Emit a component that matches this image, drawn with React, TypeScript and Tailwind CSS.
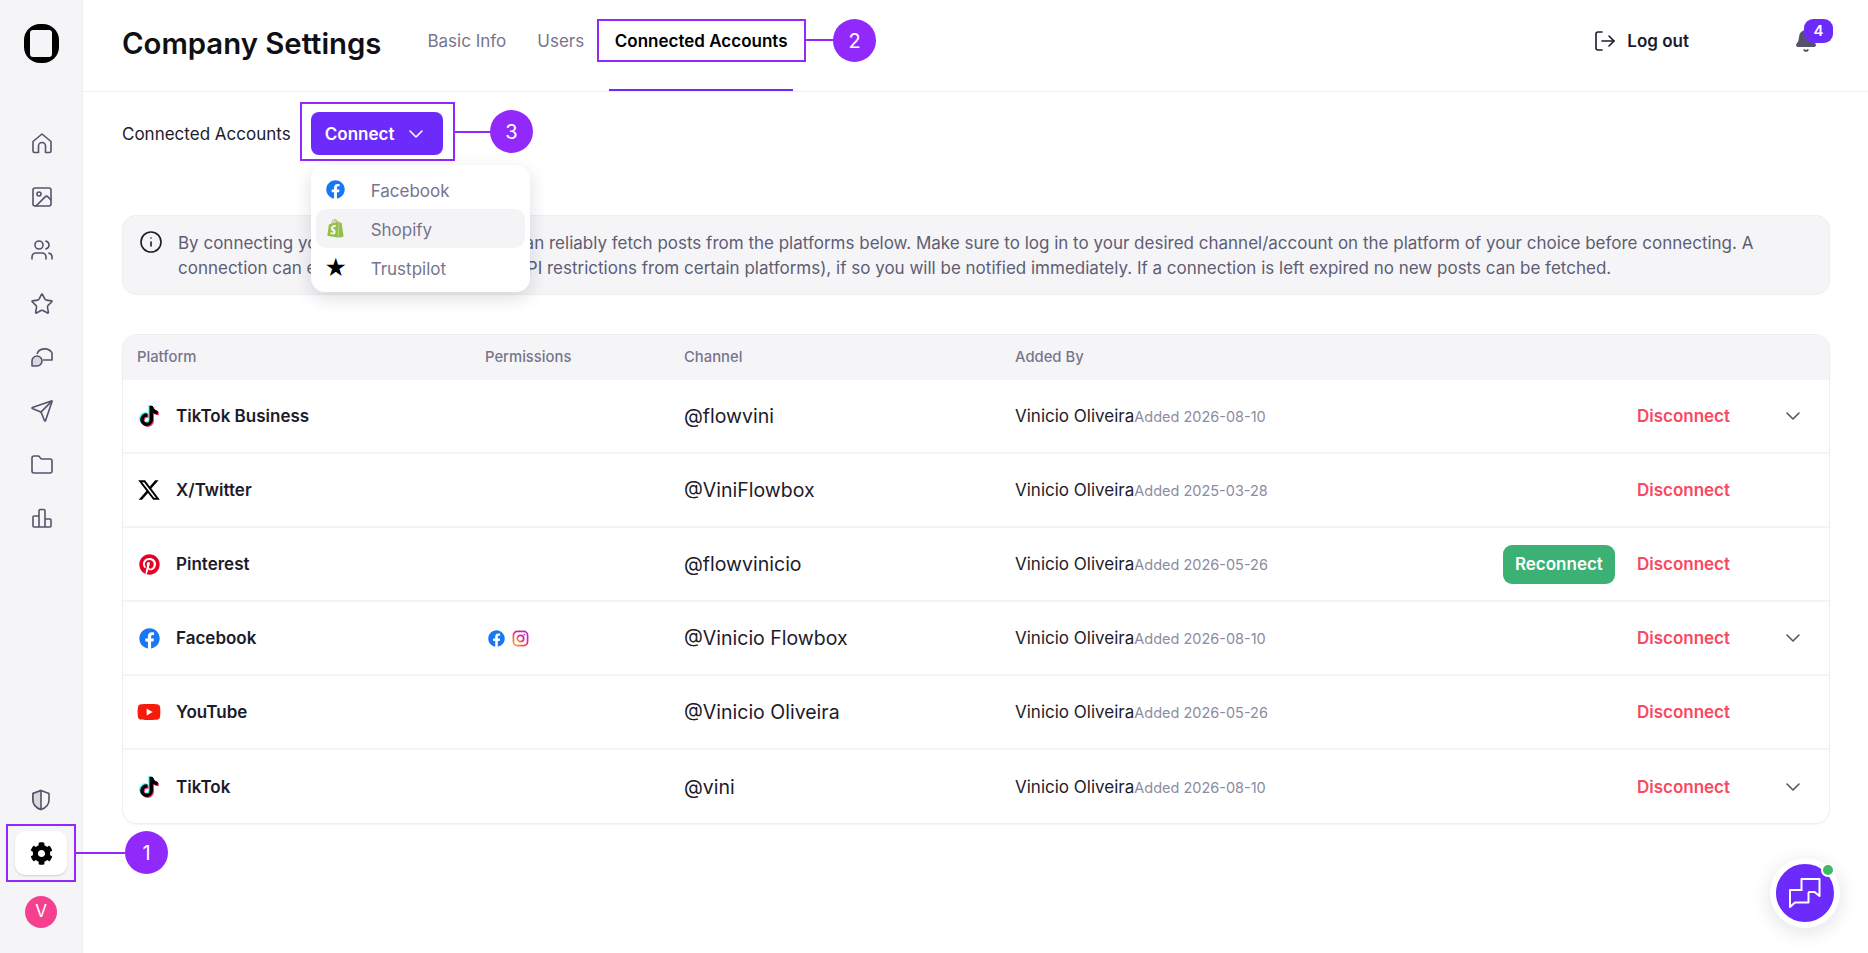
import { ChevronDown, LogOut, Info, Star, Send, Folder, Users, Image, Bell } from "lucide-react";
import { FaFacebook, FaPinterest, FaYoutube, FaShopify, FaCog } from "react-icons/fa";
import { FaTiktok, FaXTwitter } from "react-icons/fa6";

const HomeIcon = () => (
  <svg width="24" height="24" viewBox="0 0 24 24" fill="none" stroke="currentColor" strokeWidth="1.6" strokeLinejoin="round">
    <path d="M3 10.5 12 3l9 7.5V20a1.5 1.5 0 0 1-1.5 1.5h-4V15a3.5 3.5 0 0 0-7 0v6.5h-4A1.5 1.5 0 0 1 3 20z" />
  </svg>
);

const ChatsIcon = () => (
  <svg width="24" height="24" viewBox="0 0 24 24" fill="none" stroke="currentColor" strokeWidth="1.6" strokeLinejoin="round">
    <path d="M7 9a8 7 0 0 1 15-1v7h-9" />
    <path d="M2 21v-5a5 5 0 1 1 5 5z" fill="#d8d8de" />
  </svg>
);

const BarsIcon = () => (
  <svg width="24" height="24" viewBox="0 0 24 24" fill="none" stroke="currentColor" strokeWidth="1.6" strokeLinejoin="round">
    <path d="M9 21V5a1.5 1.5 0 0 1 1.500-1.500h3A1.500 1.500 0 0 1 15 5v16" />
    <path d="M9 10H4a1 1 0 0 0-1 1v9a1 1 0 0 0 1 1h16a1 1 0 0 0 1-1v-6a1 1 0 0 0-1-1h-5" />
  </svg>
);

const ShieldIcon = () => (
  <svg width="24" height="24" viewBox="0 0 24 24" fill="none" stroke="currentColor" strokeWidth="1.6" strokeLinejoin="round">
    <path d="M12 2.500 4 5.500V12c0 5 3.500 8 8 9.500 4.500-1.500 8-4.500 8-9.500V5.500z" />
    <path d="M12 2.500 4 5.500V12c0 5 3.500 8 8 9.500z" fill="#d8d8de" />
  </svg>
);

const InstagramIcon = () => (
  <svg width="17" height="17" viewBox="0 0 24 24" fill="none" strokeWidth="2.4">
    <defs>
      <linearGradient id="ig" x1="0" y1="1" x2="1" y2="0">
        <stop offset="0" stopColor="#fdb32b" />
        <stop offset="0.5" stopColor="#f0246e" />
        <stop offset="1" stopColor="#a62fd6" />
      </linearGradient>
    </defs>
    <rect x="2" y="2" width="20" height="20" rx="5.500" stroke="url(#ig)" />
    <circle cx="12" cy="12" r="4.500" stroke="url(#ig)" />
    <circle cx="17.500" cy="6.500" r="1.300" fill="#c92bb0" />
  </svg>
);

const TikTokIcon = () => (
  <span className="relative block h-[20px] w-[20px]">
    <FaTiktok size={20} className="absolute left-[-1px] top-[-1px] text-[#25f4ee]" />
    <FaTiktok size={20} className="absolute left-[1px] top-[1px] text-[#fe2c55]" />
    <FaTiktok size={20} className="absolute left-0 top-0 text-black" />
  </span>
);

const ChatBubbles = () => (
  <svg width="34" height="34" viewBox="0 0 34 34" fill="none" stroke="#fff" strokeWidth="2" strokeLinejoin="round" strokeLinecap="round">
    <path d="M13.500 14V3H31.500V20L26.500 16H21" />
    <path d="M13.500 14H2V31L7 26.500H20.500V17" />
  </svg>
);

const Marker = ({ n, className = "" }: { n: number; className?: string }) => (
  <span className={`absolute flex h-[43px] w-[43px] items-center justify-center rounded-full bg-[#9129fb] text-[20px] text-white ${className}`}>
    {n}
  </span>
);

const navIcons = [
  <HomeIcon />,
  <Image size={24} strokeWidth={1.6} />,
  <Users size={24} strokeWidth={1.6} />,
  <Star size={24} strokeWidth={1.6} />,
  <ChatsIcon />,
  <Send size={24} strokeWidth={1.6} />,
  <Folder size={24} strokeWidth={1.6} />,
  <BarsIcon />,
];

const rows = [
  { icon: <TikTokIcon />, name: "TikTok Business", channel: "@flowvini", date: "2026-08-10", expand: true },
  { icon: <FaXTwitter size={24} className="text-black" />, name: "X/Twitter", channel: "@ViniFlowbox", date: "2025-03-28" },
  { icon: <FaPinterest size={21} className="text-[#e60023]" />, name: "Pinterest", channel: "@flowvinicio", date: "2026-05-26", reconnect: true },
  { icon: <FaFacebook size={21} className="text-[#1877f2]" />, name: "Facebook", channel: "@Vinicio Flowbox", date: "2026-08-10", expand: true, perms: true },
  { icon: <FaYoutube size={24} className="text-[#f61c0d]" />, name: "YouTube", channel: "@Vinicio Oliveira", date: "2026-05-26" },
  { icon: <TikTokIcon />, name: "TikTok", channel: "@vini", date: "2026-08-10", expand: true },
];

const connectOptions = [
  { icon: <FaFacebook size={19} className="text-[#1877f2]" />, label: "Facebook" },
  { icon: <FaShopify size={19} className="text-[#95bf47]" />, label: "Shopify", active: true },
  { icon: <span className="text-[22px] leading-none text-black">★</span>, label: "Trustpilot" },
];

export default function App() {
  return (
    <div className="relative flex h-[953px] overflow-hidden bg-white font-['Inter',sans-serif] text-[#101014]">
      {/* Sidebar */}
      <aside className="flex w-[83px] shrink-0 flex-col items-center border-r border-[#eeeef1] bg-[#f5f5f8] pb-[25px] pt-[24px] text-[#55536a]">
        <div className="flex h-[39px] w-[35px] items-center justify-center rounded-[16px] bg-black">
          <div className="h-[27px] w-[22px] rounded-[3px] bg-[#f5f5f8]" />
        </div>
        <nav className="mt-[68px] flex flex-col items-center gap-[29.600px] pl-[1px]">
          {navIcons.map((icon, i) => (
            <span key={i} className="flex h-[24px] w-[24px] items-center justify-center">
              {icon}
            </span>
          ))}
        </nav>
        <div className="mt-auto flex flex-col items-center">
          <ShieldIcon />
          <div className="relative mt-[19px] flex h-[44px] w-[52px] items-center justify-center rounded-[10px] bg-white shadow-[0_1px_2px_rgba(0,0,0,0.15)]">
            <FaCog size={23} className="text-black" />
            <span className="absolute left-[-9px] top-[-7px] h-[58px] w-[70px] border-2 border-[#9129fb]" />
          </div>
          <div className="mt-[21px] flex h-[32px] w-[32px] items-center justify-center rounded-full bg-[#f5408f] text-[17px] text-white">
            V
          </div>
        </div>
      </aside>

      {/* Main column */}
      <main className="flex min-w-0 flex-1 flex-col">
        <header className="flex h-[92px] shrink-0 items-start border-b border-[#f1f1f4] pl-[39px]">
          <h1 className="mt-[24px] text-[29.300px] font-semibold leading-[40px]">Company Settings</h1>
          <div className="ml-[46px] flex h-full items-start text-[17px] text-[#77758c]">
            <span className="pt-[30px] leading-[22px]">Basic Info</span>
            <span className="ml-[31px] pt-[30px] leading-[22px]">Users</span>
            <span className="relative ml-[25px] flex h-full w-[184px] justify-center border-b-2 border-[#6c2bfa] pt-[30px] font-semibold leading-[22px] text-black">
              Connected Accounts
              <span className="absolute left-[-12px] top-[19px] h-[43px] w-[209px] border-2 border-[#9129fb]" />
            </span>
          </div>
          <div className="ml-auto flex pt-[29px]">
            <span className="flex items-center gap-[10px] text-[17px] font-semibold leading-[24px] text-[#1c1b2b]">
              <LogOut size={24} strokeWidth={1.6} />
              <span>Log out</span>
            </span>
            <span className="relative ml-[105px] mr-[50px] flex h-[24px] w-[24px] items-center justify-center text-[#55536a]">
              <Bell size={26} fill="currentColor" />
              <span className="absolute left-[10px] top-[-10px] flex h-[24px] w-[29px] items-center justify-center rounded-[9px] bg-[#6c2bfa] text-[15px] font-semibold text-white">
                4
              </span>
            </span>
          </div>
        </header>

        <div className="flex flex-col pl-[39px] pr-[38px]">
          <div className="mt-[20px] flex h-[43px] items-center">
            <span className="pt-[2px] text-[17px] text-[#1c1b2b]">Connected Accounts</span>
            <div className="relative ml-[20px]">
              <button className="flex h-[43px] w-[132px] items-center justify-center gap-[10px] rounded-[8px] bg-[#6c2bfa] text-[17px] font-semibold text-white">
                <span className="pt-[2px]">Connect</span>
                <ChevronDown size={24} strokeWidth={1.6} />
              </button>
              <span className="absolute left-[-11px] top-[-10px] h-[59px] w-[155px] border-2 border-[#9129fb]" />
              <div className="absolute left-0 top-[53px] z-10 flex h-[127px] w-[219px] flex-col rounded-[14px] bg-white p-[5px] shadow-[0_6px_18px_rgba(20,20,40,0.14)]">
                {connectOptions.map((o) => (
                  <div
                    key={o.label}
                    className={`flex h-[39px] items-center rounded-[10px] pl-[8px] text-[17px] text-[#77758c] ${o.active ? "bg-[#f4f4f7]" : ""}`}
                  >
                    <span className="flex w-[24px] justify-center">{o.icon}</span>
                    <span className="ml-[23px] pt-[4px]">{o.label}</span>
                  </div>
                ))}
              </div>
            </div>
          </div>

          <div className="mt-[60px] flex h-[80px] gap-[15px] rounded-[14px] border border-[#eeeef1] bg-[#f5f5f8] pl-[16px] pr-[60px] pt-[14px] text-[17px] leading-[25px] text-[#5f5d73]">
            <Info size={24} strokeWidth={1.6} className="shrink-0 text-[#1c1b2b]" />
            <p className="pt-[1px]">
              By connecting your accounts, the system can reliably fetch posts from the platforms below. Make sure to log in to your desired channel/account on the platform of your choice before connecting. A connection can expire at any time (due to API restrictions from certain platforms), if so you will be notified immediately. If a connection is left expired no new posts can be fetched.
            </p>
          </div>

          <div className="mt-[39px] overflow-hidden rounded-[14px] border border-[#eeeef1] shadow-[0_1px_1px_rgba(0,0,0,0.04)]">
            <div className="grid h-[45px] grid-cols-[348px_199px_331px_1fr] items-center bg-[#f5f5f8] pl-[14px] text-[14.800px] font-medium text-[#77758c]">
              <span>Platform</span>
              <span>Permissions</span>
              <span>Channel</span>
              <span>Added By</span>
            </div>
            {rows.map((r) => (
              <div
                key={r.name}
                className="grid h-[74px] grid-cols-[348px_199px_331px_1fr] items-center border-b-2 border-[#f4f4f6] pl-[14px] last:h-[73px] last:border-b-0"
              >
                <div className="flex items-center">
                  <span className="flex w-[24px] justify-center">{r.icon}</span>
                  <span className="ml-[15px] pt-[2px] text-[17px] font-semibold text-[#1c1b2b]">{r.name}</span>
                </div>
                <div className="flex items-center gap-[7px] pl-[3px]">
                  {r.perms && (
                    <>
                      <FaFacebook size={17} className="text-[#1877f2]" />
                      <InstagramIcon />
                    </>
                  )}
                </div>
                <span className="pt-[2px] text-[19.500px] text-[#1c1b2b]">{r.channel}</span>
                <div className="flex items-center">
                  <span className="pt-[2px] text-[17px] text-[#1c1b2b]">Vinicio Oliveira</span>
                  <span className="pt-[2px] text-[14.500px] text-[#8d8ba0]">Added {r.date}</span>
                  <div className="ml-auto flex items-center pr-[24px]">
                    {r.reconnect && (
                      <span className="mr-[22px] flex h-[39px] w-[112px] items-center justify-center rounded-[9px] bg-[#3bb273] pt-[2px] text-[17px] font-semibold text-white">
                        Reconnect
                      </span>
                    )}
                    <span className="pt-[2px] text-[17px] font-semibold text-[#f9495f]">Disconnect</span>
                    <span className="ml-[51px] flex h-[24px] w-[24px] justify-center text-[#55536a]">
                      {r.expand && <ChevronDown size={24} strokeWidth={1.6} />}
                    </span>
                  </div>
                </div>
              </div>
            ))}
          </div>
        </div>
      </main>

      {/* Tutorial markers over the page */}
      <span className="absolute left-[75px] top-[852px] h-[2px] w-[55px] bg-[#9129fb]" />
      <Marker n={1} className="left-[125px] top-[831px]" />
      <span className="absolute left-[806px] top-[39px] h-[2px] w-[30px] bg-[#9129fb]" />
      <Marker n={2} className="left-[833px] top-[19px]" />
      <span className="absolute left-[455px] top-[131px] h-[2px] w-[37px] bg-[#9129fb]" />
      <Marker n={3} className="left-[490px] top-[110px]" />

      {/* Chat launcher */}
      <div className="absolute left-[1770px] top-[858px] flex h-[70px] w-[70px] items-center justify-center rounded-full border-[6px] border-white bg-[#6c2bfa] shadow-[0_4px_20px_rgba(20,20,40,0.12)]">
        <ChatBubbles />
        <span className="absolute right-[-1px] top-[-1px] h-[14px] w-[14px] rounded-full border-2 border-white bg-[#3dbb62]" />
      </div>
    </div>
  );
}
